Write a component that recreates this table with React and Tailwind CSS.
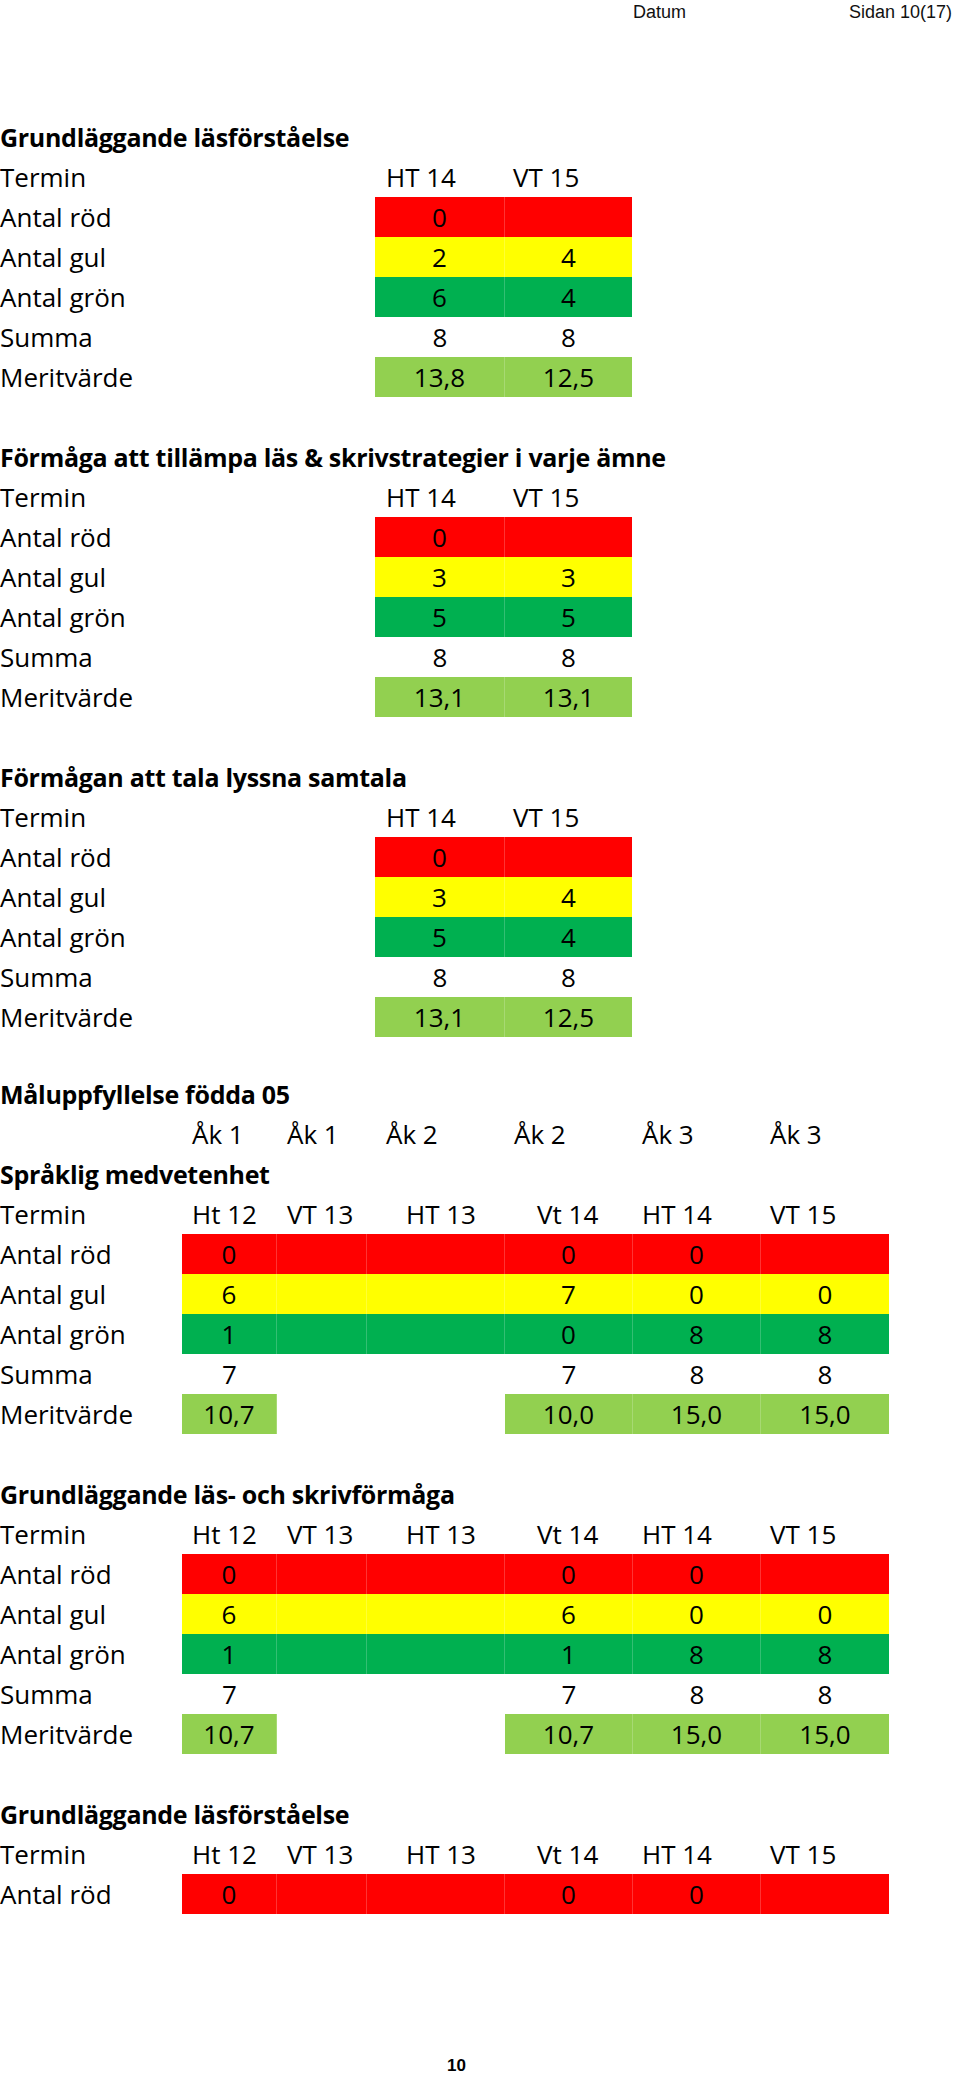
const RED = "bg-[#ff0000]";
const YEL = "bg-[#ffff00]";
const GRN = "bg-[#00b050]";
const LGR = "bg-[#92d050]";

const smallTables = [
  {
    title: "Grundläggande läsförståelse",
    rows: [
      ["Antal röd", RED, ["0", ""]],
      ["Antal gul", YEL, ["2", "4"]],
      ["Antal grön", GRN, ["6", "4"]],
      ["Summa", "", ["8", "8"]],
      ["Meritvärde", LGR, ["13,8", "12,5"]],
    ],
  },
  {
    title: "Förmåga att tillämpa läs & skrivstrategier i varje ämne",
    rows: [
      ["Antal röd", RED, ["0", ""]],
      ["Antal gul", YEL, ["3", "3"]],
      ["Antal grön", GRN, ["5", "5"]],
      ["Summa", "", ["8", "8"]],
      ["Meritvärde", LGR, ["13,1", "13,1"]],
    ],
  },
  {
    title: "Förmågan att tala lyssna samtala",
    rows: [
      ["Antal röd", RED, ["0", ""]],
      ["Antal gul", YEL, ["3", "4"]],
      ["Antal grön", GRN, ["5", "4"]],
      ["Summa", "", ["8", "8"]],
      ["Meritvärde", LGR, ["13,1", "12,5"]],
    ],
  },
];

// kolumner i den breda tabellen: rubrik-indrag per kolumn
const akHeads = [
  ["Åk 1", "pl-[10px]"],
  ["Åk 1", "pl-[10px]"],
  ["Åk 2", "pl-[19px]"],
  ["Åk 2", "pl-[9px]"],
  ["Åk 3", "pl-[9px]"],
  ["Åk 3", "pl-[9px]"],
];

const terms = [
  ["Ht 12", "pl-[10px]"],
  ["VT 13", "pl-[10px]"],
  ["HT 13", "pl-[39px]"],
  ["Vt 14", "pl-[32px]"],
  ["HT 14", "pl-[9px]"],
  ["VT 15", "pl-[9px]"],
];

const wideTables = [
  {
    title: "Språklig medvetenhet",
    rows: [
      ["Antal röd", RED, ["0", "", "", "0", "0", ""]],
      ["Antal gul", YEL, ["6", "", "", "7", "0", "0"]],
      ["Antal grön", GRN, ["1", "", "", "0", "8", "8"]],
      ["Summa", "", ["7", "", "", "7", "8", "8"]],
      ["Meritvärde", "merit", ["10,7", "", "", "10,0", "15,0", "15,0"]],
    ],
  },
  {
    title: "Grundläggande läs- och skrivförmåga",
    rows: [
      ["Antal röd", RED, ["0", "", "", "0", "0", ""]],
      ["Antal gul", YEL, ["6", "", "", "6", "0", "0"]],
      ["Antal grön", GRN, ["1", "", "", "1", "8", "8"]],
      ["Summa", "", ["7", "", "", "7", "8", "8"]],
      ["Meritvärde", "merit", ["10,7", "", "", "10,7", "15,0", "15,0"]],
    ],
  },
  {
    title: "Grundläggande läsförståelse",
    rows: [["Antal röd", RED, ["0", "", "", "0", "0", ""]]],
  },
];

const rowCls = "h-[40px] leading-[40px] whitespace-nowrap";
const headCls = "font-bold text-[25px] tracking-[-0.3px]";

function SmallTable({ table }) {
  return (
    <div className="grid grid-cols-[375px_130px_127px]">
      <div className={`col-span-3 ${headCls} ${rowCls}`}>{table.title}</div>

      <div className={rowCls}>Termin</div>
      <div className={`pl-[11px] ${rowCls}`}>HT 14</div>
      <div className={`pl-[8px] ${rowCls}`}>VT 15</div>

      {table.rows.map(([label, bg, values]) => (
        <div className="contents" key={label}>
          <div className={rowCls}>{label}</div>
          {values.map((v, i) => (
            <div
              key={i}
              className={`text-center ${rowCls} ${bg} ${bg && i === 0 ? "border-r border-white/20" : ""}`}
            >
              {v}
            </div>
          ))}
        </div>
      ))}
    </div>
  );
}

function WideTable({ table }) {
  return (
    <div className="grid grid-cols-[182px_95px_90px_138px_128px_128px_128px]">
      <div className={`col-span-7 ${headCls} ${rowCls}`}>{table.title}</div>

      <div className={rowCls}>Termin</div>
      {terms.map(([t, pad]) => (
        <div key={t} className={`${pad} ${rowCls}`}>
          {t}
        </div>
      ))}

      {table.rows.map(([label, bg, values]) => (
        <div className="contents" key={label}>
          <div className={rowCls}>{label}</div>
          {values.map((v, i) => {
            let fill = bg;
            if (bg === "merit") fill = i === 1 || i === 2 ? "" : LGR;
            const line = fill && i < 5 ? "border-r border-white/20" : "";
            return (
              <div key={i} className={`text-center ${rowCls} ${fill} ${line}`}>
                {v}
              </div>
            );
          })}
        </div>
      ))}
    </div>
  );
}

export default function App() {
  return (
    <div className="w-[960px] min-h-[2079px] bg-white text-black font-['Open_Sans',sans-serif] text-[26px] overflow-hidden">
      {/* sidhuvud */}
      <div className="flex h-[24px] items-center pl-[633px] font-['Liberation_Sans',Arial,sans-serif] text-[18px] text-[#111]">
        <span>Datum</span>
        <span className="ml-[163px]">Sidan 10(17)</span>
      </div>

      <div className="mt-[93px] flex flex-col gap-[40px]">
        {smallTables.map((t) => (
          <SmallTable key={t.title} table={t} />
        ))}
      </div>

      <div className="mt-[37px]">
        <div className={`${headCls} ${rowCls}`}>Måluppfyllelse födda 05</div>
        <div className="grid grid-cols-[182px_95px_90px_138px_128px_128px_128px]">
          <div className={rowCls}></div>
          {akHeads.map(([t, pad], i) => (
            <div key={i} className={`${pad} ${rowCls}`}>
              {t}
            </div>
          ))}
        </div>
        <div className="flex flex-col gap-[40px]">
          {wideTables.map((t, i) => (
            <WideTable key={i} table={t} />
          ))}
        </div>
      </div>

      {/* sidfot */}
      <div className="mt-[142px] pl-[447px] h-[20px] leading-[20px] font-['Liberation_Sans',Arial,sans-serif] font-bold text-[17px]">
        10
      </div>
    </div>
  );
}
